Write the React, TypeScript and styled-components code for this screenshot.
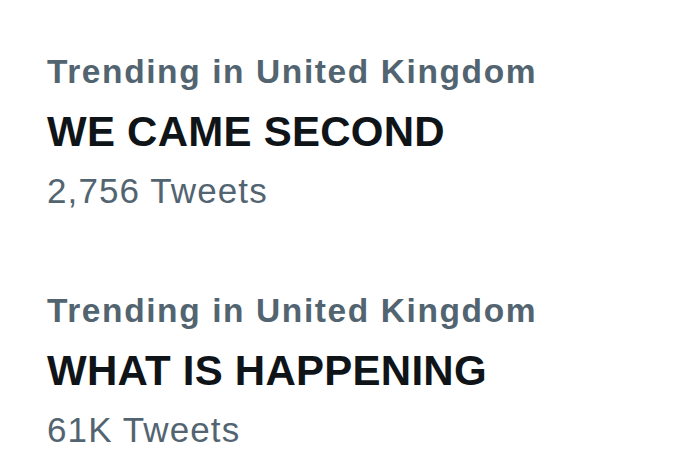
import * as React from "react";
import styled, { createGlobalStyle } from "styled-components";

const GlobalStyle = createGlobalStyle`
  html, body {
    margin: 0;
    padding: 0;
    background: #ffffff;
  }
  body {
    font-family: "Liberation Sans", Arial, sans-serif;
  }
`;

const Page = styled.div`
  width: 700px;
  height: 473px;
  box-sizing: border-box;
  padding: 50px 0 0 47px;
  display: flex;
  flex-direction: column;
  gap: 74px;
  overflow: hidden;
`;

const Trend = styled.div`
  display: flex;
  flex-direction: column;
`;

const Context = styled.div`
  color: #536471;
  font-size: 33.5px;
  font-weight: 700;
  line-height: 44px;
  letter-spacing: 1.6px;
`;

const Title = styled.div`
  color: #0f1419;
  font-size: 42px;
  font-weight: 700;
  line-height: 64px;
  margin-top: 6px;
  letter-spacing: 0.25px;
`;

const Count = styled.div`
  color: #536471;
  font-size: 35px;
  font-weight: 400;
  line-height: 48px;
  margin-top: 3px;
  letter-spacing: 1.1px;
`;

const trends = [
  { context: "Trending in United Kingdom", title: "WE CAME SECOND", count: "2,756 Tweets" },
  { context: "Trending in United Kingdom", title: "WHAT IS HAPPENING", count: "61K Tweets" },
];

const App = (): React.ReactElement => {
  return (
    <>
      <GlobalStyle />
      <Page>
        {trends.map((t, i) => (
          <Trend key={i}>
            <Context>{t.context}</Context>
            <Title>{t.title}</Title>
            <Count>{t.count}</Count>
          </Trend>
        ))}
      </Page>
    </>
  );
};

export default App;
